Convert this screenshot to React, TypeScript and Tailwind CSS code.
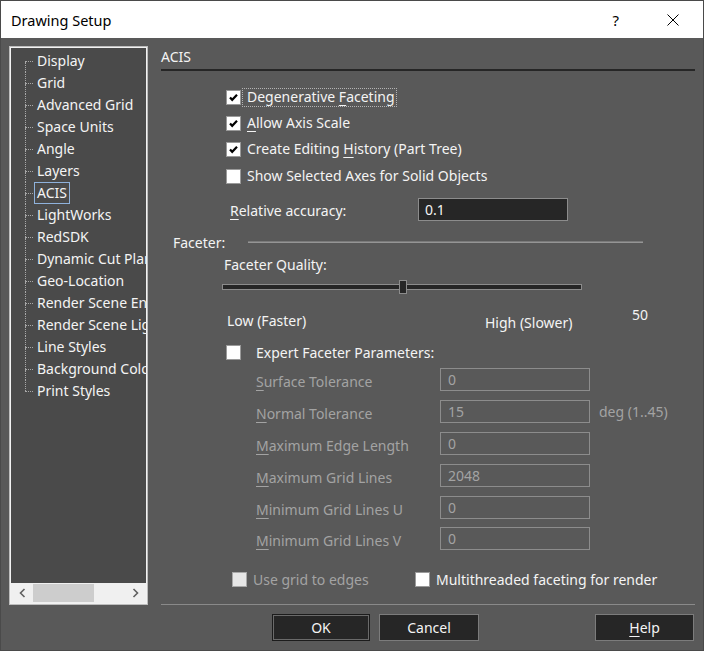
import React from "react";

const TXT = "text-[#f4f4f4]";
const DIS = "text-[#a3a3a3]";

function U({ c }: { c: string }) {
  return <span className="underline decoration-1 underline-offset-[3px]">{c}</span>;
}

function Check({ checked = false, disabled = false }: { checked?: boolean; disabled?: boolean }) {
  return (
    <div
      className={`w-[15px] h-[15px] shrink-0 border flex items-center justify-center ${
        disabled ? "bg-[#e6e6e6] border-[#a8a8a8]" : "bg-white border-[#9a9a9a]"
      }`}
    >
      {checked && (
        <svg width="11" height="11" viewBox="0 0 11 11">
          <polyline points="2,5.5 4.2,7.8 9,2.8" fill="none" stroke="#000" strokeWidth="2.2" />
        </svg>
      )}
    </div>
  );
}

const treeItems = [
  "Display",
  "Grid",
  "Advanced Grid",
  "Space Units",
  "Angle",
  "Layers",
  "ACIS",
  "LightWorks",
  "RedSDK",
  "Dynamic Cut Plane",
  "Geo-Location",
  "Render Scene Environment",
  "Render Scene Lights",
  "Line Styles",
  "Background Colors",
  "Print Styles",
];

function Tree() {
  return (
    <div className="w-[139px] h-[559px] shrink-0 border border-[#bdbdbd]">
      <div className="w-full h-full border border-[#f2f2f2] bg-[#4a4a4a] flex flex-col">
        <div className="flex-1 pt-[2px] overflow-hidden">
          {treeItems.map((t, i) => {
            const first = i === 0;
            const last = i === treeItems.length - 1;
            const sel = t === "ACIS";
            return (
              <div key={t} className="h-[22px] flex pl-[14px]">
                <div className="w-[8px] shrink-0 flex flex-col">
                  <div
                    className={`h-[11px] ${first ? "" : "border-l border-dotted border-[#a8a8a8]"}`}
                  />
                  <div className="h-[1px] border-t border-dotted border-[#a8a8a8]" />
                  <div className={`flex-1 ${last ? "" : "border-l border-dotted border-[#a8a8a8]"}`} />
                </div>
                <div
                  className={`ml-[1px] px-[2px] border flex items-center whitespace-nowrap ${TXT} ${
                    sel ? "border-[#8fb2dc]" : "border-transparent"
                  }`}
                >
                  {t}
                </div>
              </div>
            );
          })}
        </div>
        <div className="h-[20px] bg-[#f0f0f0] flex items-center shrink-0">
          <div className="w-[22px] h-full flex items-center justify-center">
            <svg width="7" height="10" viewBox="0 0 7 10">
              <polyline points="5.5,1 1.5,5 5.5,9" fill="none" stroke="#606060" strokeWidth="1.6" />
            </svg>
          </div>
          <div className="w-[61px] h-[18px] bg-[#cdcdcd]" />
          <div className="flex-1" />
          <div className="w-[22px] h-full flex items-center justify-center">
            <svg width="7" height="10" viewBox="0 0 7 10">
              <polyline points="1.5,1 5.5,5 1.5,9" fill="none" stroke="#606060" strokeWidth="1.6" />
            </svg>
          </div>
        </div>
      </div>
    </div>
  );
}

function Field({ value }: { value: string }) {
  return (
    <div className={`w-[150px] h-[23px] shrink-0 border border-[#8c8c8c] flex items-center pl-[7px] ${DIS}`}>
      {value}
    </div>
  );
}

function GridRow({
  mt,
  first,
  rest,
  value,
  extra,
}: {
  mt: string;
  first: string;
  rest: string;
  value: string;
  extra?: string;
}) {
  return (
    <div className={`${mt} h-[23px] flex items-center pl-[95px]`}>
      <div className={`w-[184px] shrink-0 pt-[4px] ${DIS}`}>
        <U c={first} />
        {rest}
      </div>
      <Field value={value} />
      {extra && <div className={`ml-[9px] ${DIS}`}>{extra}</div>}
    </div>
  );
}

function Btn({ w, children, def = false }: { w: string; children: React.ReactNode; def?: boolean }) {
  return (
    <div
      className={`${w} h-[27px] shrink-0 border ${
        def ? "border-[#1c1c1c]" : "border-[#7c7c7c]"
      } bg-[#262626]`}
    >
      <div
        className={`w-full h-full border ${def ? "border-[#6a6a6a]" : "border-transparent"} flex items-center justify-center ${TXT}`}
      >
        {children}
      </div>
    </div>
  );
}

function RightPanel() {
  return (
    <div className="ml-[13px] w-[534px] flex flex-col">
      <div className={`h-[23px] flex items-center pb-[2px] ${TXT}`}>ACIS</div>
      <div className="h-[2px] bg-[#262626]" />

      <div className="mt-[13px] pl-[65px] flex flex-col">
        <div className="h-[26px] flex items-center">
          <Check checked />
          <div
            className={`ml-[1px] h-[19px] border border-dotted border-[#b4b4b4] pl-[4px] pr-[1px] flex items-center ${TXT}`}
          >
            Degenerative&nbsp;<U c="F" />
            aceting
          </div>
        </div>
        <div className="h-[26px] flex items-center">
          <Check checked />
          <div className={`ml-[6px] ${TXT}`}>
            <U c="A" />
            llow Axis Scale
          </div>
        </div>
        <div className="h-[26px] flex items-center">
          <Check checked />
          <div className={`ml-[6px] ${TXT}`}>
            Create Editing <U c="H" />
            istory (Part Tree)
          </div>
        </div>
        <div className="h-[28px] flex items-center">
          <Check />
          <div className={`ml-[6px] ${TXT}`}>Show Selected Axes for Solid Objects</div>
        </div>
      </div>

      <div className="mt-[8px] h-[23px] flex items-center pl-[69px]">
        <div className={`w-[188px] shrink-0 pt-[2px] ${TXT}`}>
          <U c="R" />
          elative accuracy:
        </div>
        <div className={`w-[150px] h-[23px] border border-[#8c8c8c] bg-[#262626] flex items-center pl-[6px] ${TXT}`}>
          0.1
        </div>
      </div>

      <div className="mt-[12px] h-[20px] flex items-start pl-[12px]">
        <div className={`w-[75px] shrink-0 leading-[20px] ${TXT}`}>Faceter:</div>
        <div className="w-[395px] h-[2px] mt-[8px] border-t border-[#7a7a7a] border-b-[1px] border-b-[#959595]" />
      </div>

      <div className={`mt-[2px] h-[20px] flex items-center pl-[63px] ${TXT}`}>Faceter Quality:</div>

      <div className="mt-[5px] h-[14px] pl-[61px] flex items-start">
        <div className="relative mt-[4px] w-[360px] h-[6px] border border-[#8c8c8c] bg-[#262626]">
          <div className="absolute left-[176px] top-[-5px] w-[8px] h-[14px] border border-[#8c8c8c] bg-[#262626]" />
        </div>
      </div>

      <div className="mt-[10px] h-[30px] flex items-start pl-[66px]">
        <div className={`w-[258px] shrink-0 mt-[7px] leading-[20px] ${TXT}`}>Low (Faster)</div>
        <div className={`w-[147px] shrink-0 mt-[9px] leading-[20px] ${TXT}`}>High (Slower)</div>
        <div className={`mt-[1px] leading-[20px] ${TXT}`}>50</div>
      </div>

      <div className="mt-[8px] h-[20px] flex items-center pl-[65px]">
        <Check />
        <div className={`ml-[15px] pt-[2px] ${TXT}`}>Expert Faceter Parameters:</div>
      </div>

      <GridRow mt="mt-[6px]" first="S" rest="urface Tolerance" value="0" />
      <GridRow mt="mt-[9px]" first="N" rest="ormal Tolerance" value="15" extra="deg (1..45)" />
      <GridRow mt="mt-[9px]" first="M" rest="aximum Edge Length" value="0" />
      <GridRow mt="mt-[9px]" first="M" rest="aximum Grid Lines" value="2048" />
      <GridRow mt="mt-[9px]" first="M" rest="inimum Grid Lines U" value="0" />
      <GridRow mt="mt-[8px]" first="M" rest="inimum Grid Lines V" value="0" />

      <div className="mt-[19px] h-[20px] flex items-center pl-[71px]">
        <Check disabled />
        <div className={`ml-[6px] w-[162px] shrink-0 pt-[1px] ${DIS}`}>Use grid to edges</div>
        <Check />
        <div className={`ml-[6px] pt-[1px] ${TXT}`}>Multithreaded faceting for render</div>
      </div>

      <div className="mt-[15px] h-[1px] bg-[#8a8a8a]" />
    </div>
  );
}

export default function App() {
  return (
    <div className="w-[704px] h-[651px] border border-[#4a4a4a] flex flex-col overflow-hidden font-['Noto_Sans',sans-serif] text-[14px] leading-[20px]">
      <div className="h-[37px] shrink-0 bg-white flex items-center pl-[10px] text-black">
        <span className="text-[14.5px]">Drawing Setup</span>
        <div className="ml-auto flex items-center pr-[24px]">
          <span className="text-[15px]">?</span>
          <svg className="ml-[48px]" width="12" height="12" viewBox="0 0 12 12">
            <line x1="0.5" y1="0.5" x2="11.5" y2="11.5" stroke="#000" strokeWidth="1" />
            <line x1="11.5" y1="0.5" x2="0.5" y2="11.5" stroke="#000" strokeWidth="1" />
          </svg>
        </div>
      </div>
      <div className="flex-1 bg-[#595959] flex flex-col px-[8px] pt-[8px]">
        <div className="flex">
          <Tree />
          <RightPanel />
        </div>
        <div className="mt-[9px] flex">
          <div className="ml-[263px]" />
          <Btn w="w-[98px]" def>
            OK
          </Btn>
          <div className="ml-[9px]" />
          <Btn w="w-[100px]">Cancel</Btn>
          <div className="ml-[116px]" />
          <Btn w="w-[99px]">
            <U c="H" />
            elp
          </Btn>
        </div>
      </div>
    </div>
  );
}
